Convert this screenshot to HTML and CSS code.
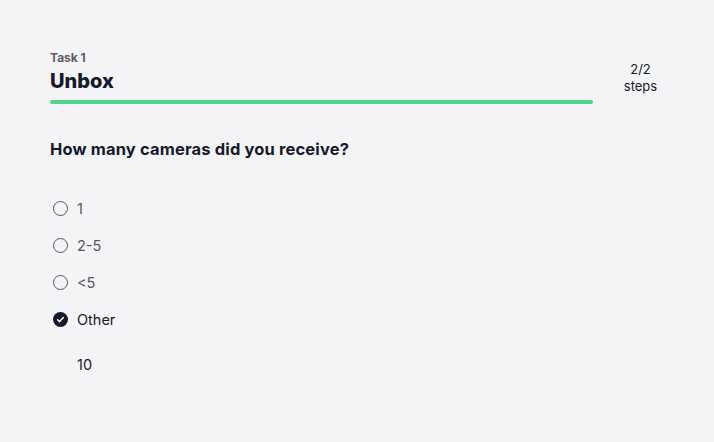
FILE: index.html
```html
<!DOCTYPE html>
<html>
<head>
<meta charset="utf-8">
<link rel="stylesheet" href="styles.css">
</head>
<body>
<div class="page">
  <div class="header">
    <div class="head-main">
      <div class="task">Task 1</div>
      <div class="title">Unbox</div>
      <div class="bar"><div class="bar-fill" style="width:100%"></div></div>
    </div>
    <div class="steps">2/2<br>steps</div>
  </div>
  <div class="question">How many cameras did you receive?</div>
  <div class="options">
    <div class="opt"><span class="radio"></span><span class="label">1</span></div>
    <div class="opt"><span class="radio"></span><span class="label">2-5</span></div>
    <div class="opt"><span class="radio"></span><span class="label">&lt;5</span></div>
    <div class="opt checked"><span class="radio on"><svg width="15" height="15" viewBox="0 0 15 15"><circle cx="7.5" cy="7.5" r="7.5" fill="#141a2b"/><path d="M4.6 7.7 L6.6 9.6 L10.4 5.6" fill="none" stroke="#fff" stroke-width="1.5" stroke-linecap="round" stroke-linejoin="round"/></svg></span><span class="label">Other</span></div>
  </div>
  <div class="other-value">10</div>
</div>
</body>
</html>
```
FILE: styles.css
```css
html, body {
  margin: 0;
  padding: 0;
  background: #f4f4f7;
}
body {
  font-family: Inter, Lato, sans-serif;
  color: #141a2b;
  width: 714px;
  height: 442px;
  overflow: hidden;
}
.page {
  padding: 50px 50px 0 50px;
}
.header {
  display: flex;
  align-items: flex-start;
}
.head-main {
  width: 543px;
}
.task {
  font-size: 12px;
  font-weight: 700;
  color: #5a5c63;
  line-height: 16px;
}
.title {
  font-size: 20px;
  font-weight: 800;
  line-height: 26px;
  margin-top: 2px;
}
.bar {
  margin-top: 6px;
  height: 4px;
  border-radius: 2px;
  background: #dfe0e5;
}
.bar-fill {
  height: 4px;
  border-radius: 2px;
  background: #4fd68a;
}
.steps {
  flex: 1;
  text-align: center;
  font-size: 13px;
  line-height: 17px;
  color: #141a2b;
  margin-top: 11px;
  padding-left: 24px;
}
.question {
  margin-top: 35px;
  font-size: 16.5px;
  font-weight: 700;
  line-height: 20px;
  letter-spacing: 0.15px;
}
.options {
  margin-top: 39px;
  display: flex;
  flex-direction: column;
  gap: 17.3px;
}
.opt {
  display: flex;
  align-items: center;
  height: 20px;
  padding-left: 3px;
}
.radio {
  width: 13px;
  height: 13px;
  border: 1.3px solid #55575e;
  border-radius: 50%;
  box-sizing: content-box;
  display: inline-block;
}
.radio.on {
  border: none;
  width: 15px;
  height: 15px;
}
.radio.on svg {
  display: block;
}
.label {
  margin-left: 9px;
  font-size: 14.5px;
  color: #55575e;
}
.checked .label {
  color: #141a2b;
}
.other-value {
  margin-top: 26px;
  padding-left: 27px;
  font-size: 14.5px;
  color: #141a2b;
  line-height: 18px;
}
```
